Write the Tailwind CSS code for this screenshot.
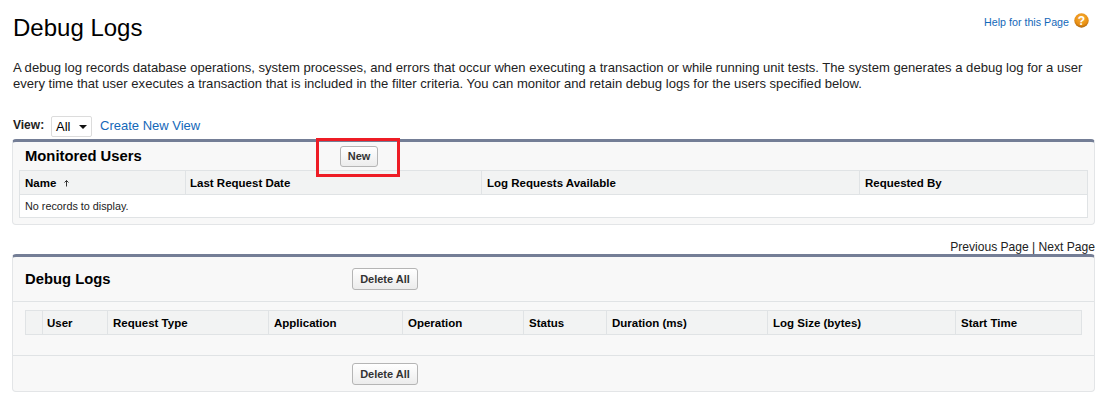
<!DOCTYPE html>
<html>
<head>
<meta charset="utf-8">
<script src="https://cdn.jsdelivr.net/npm/@tailwindcss/browser@4"></script>
</head>
<body class="relative bg-white font-['Liberation_Sans',Arial,sans-serif] text-[#222] w-[1106px] h-[405px] overflow-hidden">
  <div class="px-[12px]">
    <div class="flex justify-between h-[60px]">
      <h1 class="text-[24px] leading-[28px] pt-[14px] pl-[1px] text-black">Debug Logs</h1>
      <div class="flex items-start pt-[13px] pr-[5px] gap-[5px]">
        <a class="text-[10.700px] leading-[18px] text-[#1468b9]">Help for this Page</a>
        <svg width="15" height="15" viewBox="0 0 15 15"><defs><radialGradient id="h" cx="50%" cy="35%" r="65%"><stop offset="0" stop-color="#f7b13c"/><stop offset="0.7" stop-color="#e98f12"/><stop offset="1" stop-color="#a8640f"/></radialGradient></defs><circle cx="7.5" cy="7.5" r="7.2" fill="url(#h)"/><text x="7.5" y="11.800" text-anchor="middle" font-size="12" font-weight="700" font-family="Liberation Sans" fill="#fff">?</text></svg>
      </div>
    </div>
    <p class="text-[13.070px] leading-[16px] pl-[1px] text-[#222] w-[1082px]">A debug log records database operations, system processes, and errors that occur when executing a transaction or while running unit tests. The system generates a debug log for a user every time that user executes a transaction that is included in the filter criteria. You can monitor and retain debug logs for the users specified below.</p>
    <div class="flex items-center h-[21px] mt-[24px] pl-[1px]">
      <span class="text-[12px] font-bold w-[38px] text-[#222] -mt-[4px]">View:</span>
      <div class="flex items-center justify-between w-[41px] h-[21px] border border-[#dcdcdc] rounded-[2px] pl-[4px] pr-[4px] text-[13px] leading-[18px] text-black pt-[1px]">
        <span>All</span>
        <svg width="8" height="4" viewBox="0 0 8 4"><path d="M0 0h8L4 4z" fill="#111"/></svg>
      </div>
      <a class="text-[13px] ml-[8px] text-[#1468b9] -mt-[2px]">Create New View</a>
    </div>

    <section class="mt-[2px] h-[86px] w-[1083px] border border-[#e3e5e7] border-t-[3px] border-t-[#747e96] rounded-[4px] bg-[#f8f8f8] px-[6px]">
      <div class="flex items-center h-[28px]">
        <h2 class="text-[14.800px] font-bold text-black pl-[6px] w-[321px]">Monitored Users</h2>
        <button class="h-[21px] w-[38px] border border-[#b5b5b5] rounded-[3px] bg-gradient-to-b from-white to-[#ececec] text-[11px] font-bold text-[#333]">New</button>
      </div>
      <div class="border border-[#e0e3e5] bg-white w-[1069px]">
        <div class="grid grid-cols-[165px_296px_378px_1fr] h-[24px] pt-[2px] bg-[#f2f3f3] border-b border-[#e0e3e5] text-[11.500px] font-bold text-black items-stretch">
          <div class="flex items-center pl-[5px] gap-[8px]">Name <svg width="5" height="7" viewBox="0 0 5 7"><path d="M2.500 0.500v6M0.500 2.500l2-2 2 2" fill="none" stroke="#333"/></svg></div>
          <div class="flex items-center pl-[4px] -mt-[2px] pt-[2px] border-l border-[#e0e3e5]">Last Request Date</div>
          <div class="flex items-center pl-[5px] -mt-[2px] pt-[2px] border-l border-[#e0e3e5]">Log Requests Available</div>
          <div class="flex items-center pl-[5px] -mt-[2px] pt-[2px] border-l border-[#e0e3e5]">Requested By</div>
        </div>
        <div class="h-[22px] flex items-center pl-[5px] text-[10.800px] text-[#222]">No records to display.</div>
      </div>
    </section>

    <div class="h-[29px] w-[1083px] text-right text-[12.080px] leading-[14px] pt-[15px] text-[#222]">Previous Page | Next Page</div>

    <section class="h-[138px] w-[1083px] border border-[#e3e5e7] border-t-[3px] border-t-[#747e96] rounded-[4px] bg-[#f8f8f8]">
      <div class="flex items-center h-[45px] border-b border-[#e0e3e5]">
        <h2 class="text-[14.800px] font-bold text-black pl-[12px] w-[339px]">Debug Logs</h2>
        <button class="h-[22px] w-[66px] border border-[#b5b5b5] rounded-[3px] bg-gradient-to-b from-white to-[#ececec] text-[11px] font-bold text-[#333]">Delete All</button>
      </div>
      <div class="h-[54px] border-b border-[#e0e3e5] pt-[8px] pl-[12px]">
        <div class="grid grid-cols-[16px_65px_161px_134px_121px_83px_161px_188px_1fr] h-[25px] w-[1057px] border border-[#e0e3e5] bg-[#f2f3f3] text-[11.500px] font-bold text-black">
          <div></div>
          <div class="flex items-center pl-[4px] pt-[2px] border-l border-[#e0e3e5]">User</div>
          <div class="flex items-center pl-[5px] pt-[2px] border-l border-[#e0e3e5]">Request Type</div>
          <div class="flex items-center pl-[5px] pt-[2px] border-l border-[#e0e3e5]">Application</div>
          <div class="flex items-center pl-[5px] pt-[2px] border-l border-[#e0e3e5]">Operation</div>
          <div class="flex items-center pl-[5px] pt-[2px] border-l border-[#e0e3e5]">Status</div>
          <div class="flex items-center pl-[5px] pt-[2px] border-l border-[#e0e3e5]">Duration (ms)</div>
          <div class="flex items-center pl-[5px] pt-[2px] border-l border-[#e0e3e5]">Log Size (bytes)</div>
          <div class="flex items-center pl-[5px] pt-[2px] border-l border-[#e0e3e5]">Start Time</div>
        </div>
      </div>
      <div class="flex pl-[339px] pt-[7px]">
        <button class="h-[22px] w-[66px] border border-[#b5b5b5] rounded-[3px] bg-gradient-to-b from-white to-[#ececec] text-[11px] font-bold text-[#333]">Delete All</button>
      </div>
    </section>
  </div>
  <div class="absolute left-[316px] top-[138px] w-[84px] h-[39px] border-[3px] border-[#ee1c25]"></div>
</body>
</html>
